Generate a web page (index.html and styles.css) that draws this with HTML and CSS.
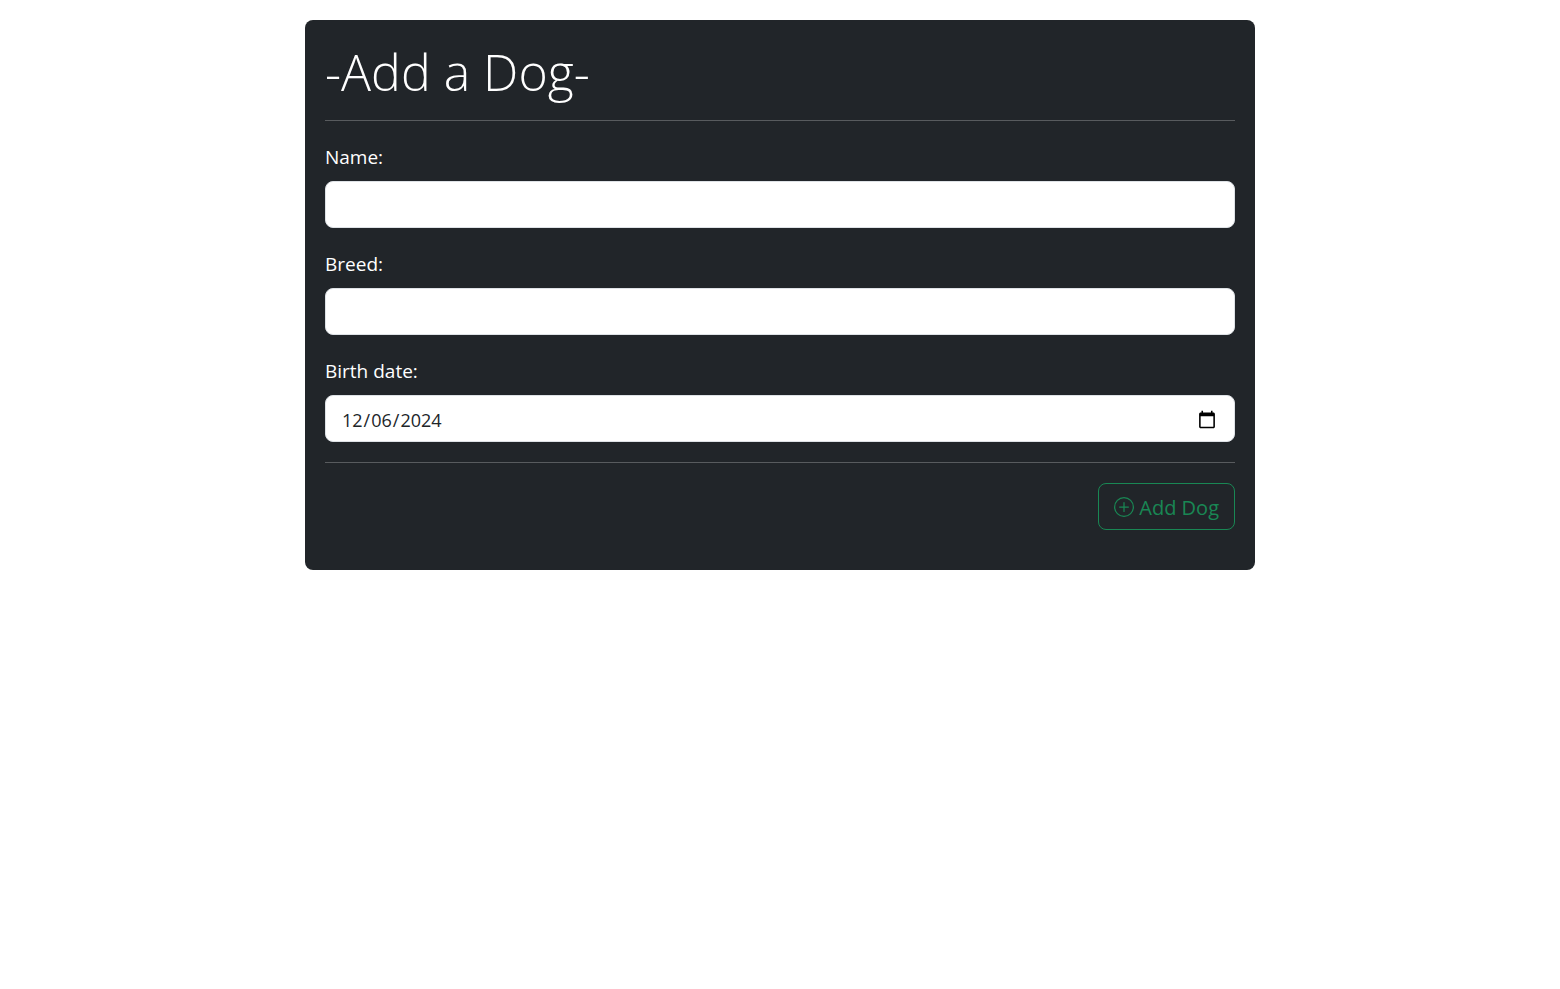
FILE: index.html
```html
<!DOCTYPE html>
<html lang="en">
<head>
  <meta charset="utf-8">
  <meta name="viewport" content="width=device-width, initial-scale=1">
  <title>Add a Dog</title>
  <link rel="stylesheet" href="styles.css">
</head>
<body>
  <main class="container">
    <form class="card">
      <h1 class="title">-Add a Dog-</h1>
      <hr class="rule">
      <div class="field">
        <label class="label" for="name">Name:</label>
        <input class="control" type="text" id="name" name="name">
      </div>
      <div class="field">
        <label class="label" for="breed">Breed:</label>
        <input class="control" type="text" id="breed" name="breed">
      </div>
      <div class="field">
        <label class="label" for="birth-date">Birth date:</label>
        <input class="control" type="date" id="birth-date" name="birthDate" value="2024-12-06">
      </div>
      <hr class="rule">
      <div class="actions">
        <button class="button" type="submit">
          <svg class="icon" viewBox="0 0 16 16" fill="currentColor" aria-hidden="true">
            <path d="M8 15A7 7 0 1 1 8 1a7 7 0 0 1 0 14m0 1A8 8 0 1 0 8 0a8 8 0 0 0 0 16"/>
            <path d="M8 4a.5.5 0 0 1 .5.5v3h3a.5.5 0 0 1 0 1h-3v3a.5.5 0 0 1-1 0v-3h-3a.5.5 0 0 1 0-1h3v-3A.5.5 0 0 1 8 4"/>
          </svg>
          <span class="button-text">Add Dog</span>
        </button>
      </div>
    </form>
  </main>
</body>
</html>
```
FILE: styles.css
```css
*,
*::before,
*::after {
  box-sizing: border-box;
}

body {
  margin: 0;
  background: #fff;
  color: #212529;
  font-family: "Segoe UI", "Open Sans", "Noto Sans", sans-serif;
  font-size: 19px;
  line-height: 28px;
}

.container {
  max-width: 950px;
  margin: 20px auto;
}

.card {
  padding: 20px 20px 40px;
  border-radius: 8px;
  background: #212529;
  color: #fff;
}

.title {
  margin: 0;
  padding-top: 4px;
  font-size: 50px;
  font-weight: 300;
  line-height: 56px;
}

.rule {
  height: 1px;
  margin: 20px 0;
  border: 0;
  background: #585b5e;
}

.field {
  margin-bottom: 20px;
}

.label {
  display: block;
  margin-bottom: 10px;
  padding-top: 2px;
}

.control {
  display: block;
  width: 100%;
  height: 47px;
  padding: 8px 15px 6px;
  border: 1px solid #dee2e6;
  border-radius: 8px;
  background: #fff;
  color: #212529;
  font: inherit;
  font-size: 18px;
}

.control::-webkit-calendar-picker-indicator {
  width: 20px;
  height: 20px;
}

.actions {
  display: flex;
  justify-content: flex-end;
}

.button {
  display: flex;
  align-items: center;
  gap: 5px;
  height: 47px;
  padding: 0 15px;
  border: 1px solid #198754;
  border-radius: 8px;
  background: transparent;
  color: #198754;
  font: inherit;
  font-size: 20px;
  cursor: pointer;
}

.button-text {
  padding-top: 2px;
}

.icon {
  width: 20px;
  height: 20px;
}
```
